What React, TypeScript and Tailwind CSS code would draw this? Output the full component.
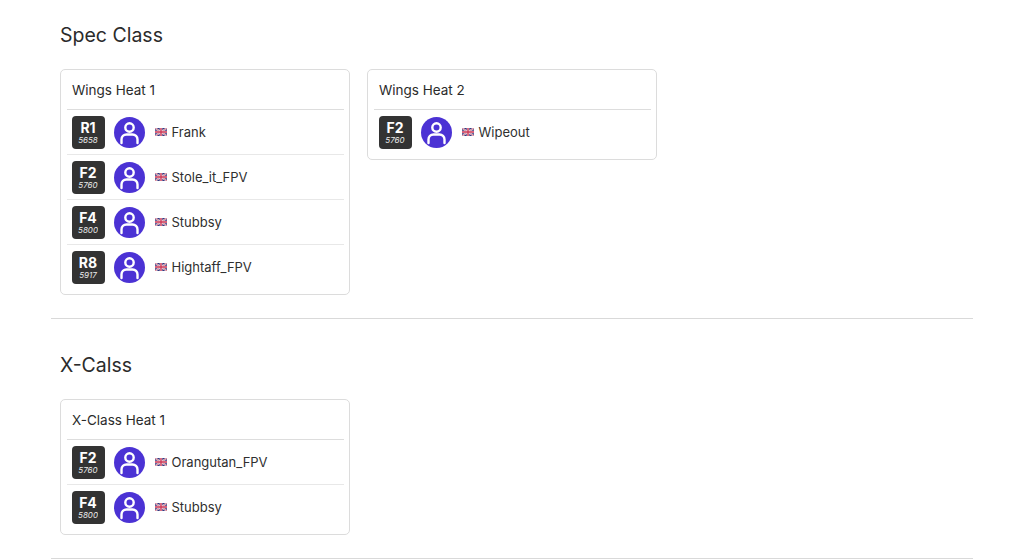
const FONT = "font-['Inter','Noto_Sans',sans-serif]"

type Pilot = { band: string; freq: string; name: string }
type Heat = { title: string; pilots: Pilot[] }

const SPEC_HEATS: Heat[] = [
  {
    title: 'Wings Heat 1',
    pilots: [
      { band: 'R1', freq: '5658', name: 'Frank' },
      { band: 'F2', freq: '5760', name: 'Stole_it_FPV' },
      { band: 'F4', freq: '5800', name: 'Stubbsy' },
      { band: 'R8', freq: '5917', name: 'Hightaff_FPV' },
    ],
  },
  {
    title: 'Wings Heat 2',
    pilots: [{ band: 'F2', freq: '5760', name: 'Wipeout' }],
  },
]

const X_HEATS: Heat[] = [
  {
    title: 'X-Class Heat 1',
    pilots: [
      { band: 'F2', freq: '5760', name: 'Orangutan_FPV' },
      { band: 'F4', freq: '5800', name: 'Stubbsy' },
    ],
  },
]

function UkFlag() {
  return (
    <svg width="12" height="8" viewBox="0 0 60 40" className="shrink-0">
      <rect width="60" height="40" rx="5" fill="#33367f" />
      <path d="M0 0 60 40M60 0 0 40" stroke="#eadfe4" strokeWidth="9" />
      <path d="M0 0 60 40M60 0 0 40" stroke="#cf3a58" strokeWidth="3" />
      <path d="M30 0V40M0 20H60" stroke="#eadfe4" strokeWidth="13" />
      <path d="M30 0V40M0 20H60" stroke="#cf3a58" strokeWidth="7" />
    </svg>
  )
}

function Avatar() {
  return (
    <span className="grid size-[31px] shrink-0 place-items-center rounded-full bg-[#4b32d4]">
      <svg width="31" height="31" viewBox="0 0 31 31" fill="none" stroke="white" strokeWidth="2.4">
        <circle cx="15.5" cy="10.5" r="4.2" />
        <path d="M7.5 26v-3.5a5 5 0 0 1 5-5h6a5 5 0 0 1 5 5V26" strokeLinecap="round" />
      </svg>
    </span>
  )
}

function PilotRow({ pilot }: { pilot: Pilot }) {
  return (
    <div className="flex h-[45px] items-center border-t border-[#e8e8e8] pl-[5px] first-of-type:border-[#dddddd]">
      <span className="flex size-[33px] shrink-0 flex-col items-center justify-center rounded-[4px] bg-[#333333] text-white">
        <span className="text-[14px] leading-[15px] font-bold">{pilot.band}</span>
        <span className="text-[8px] leading-[10px] italic opacity-90">{pilot.freq}</span>
      </span>
      <span className="ml-[9px]">
        <Avatar />
      </span>
      <span className="ml-2.5 flex items-center gap-[5px] text-[13px] text-[#2f2f2f]">
        <UkFlag />
        <span className="pt-0.5">{pilot.name}</span>
      </span>
    </div>
  )
}

function HeatCard({ heat }: { heat: Heat }) {
  return (
    <div className="w-[290px] rounded-[5px] border border-[#dcdcdc] bg-white px-[5.5px] pb-[5px]">
      <h3 className="h-[39px] pt-[11px] pl-[5.5px] text-[13.5px] leading-[19px] text-[#2b2b2b]">{heat.title}</h3>
      {heat.pilots.map((pilot) => (
        <PilotRow key={pilot.name} pilot={pilot} />
      ))}
    </div>
  )
}

function Section({ title, heats }: { title: string; heats: Heat[] }) {
  return (
    <section className="border-b border-[#d9d9d9] pb-[23px] pl-[9px]">
      <h2 className="text-[19.5px] leading-[28px] font-normal text-[#2b2b2b]">{title}</h2>
      <div className="mt-5 flex items-start gap-[17px]">
        {heats.map((heat) => (
          <HeatCard key={heat.title} heat={heat} />
        ))}
      </div>
    </section>
  )
}

export default function App() {
  return (
    <div className={`${FONT} h-[560px] w-[1024px] overflow-hidden bg-white px-[51px]`}>
      <div className="flex w-[922px] flex-col gap-8 pt-[21px]">
        <Section title="Spec Class" heats={SPEC_HEATS} />
        <Section title="X-Calss" heats={X_HEATS} />
      </div>
    </div>
  )
}
